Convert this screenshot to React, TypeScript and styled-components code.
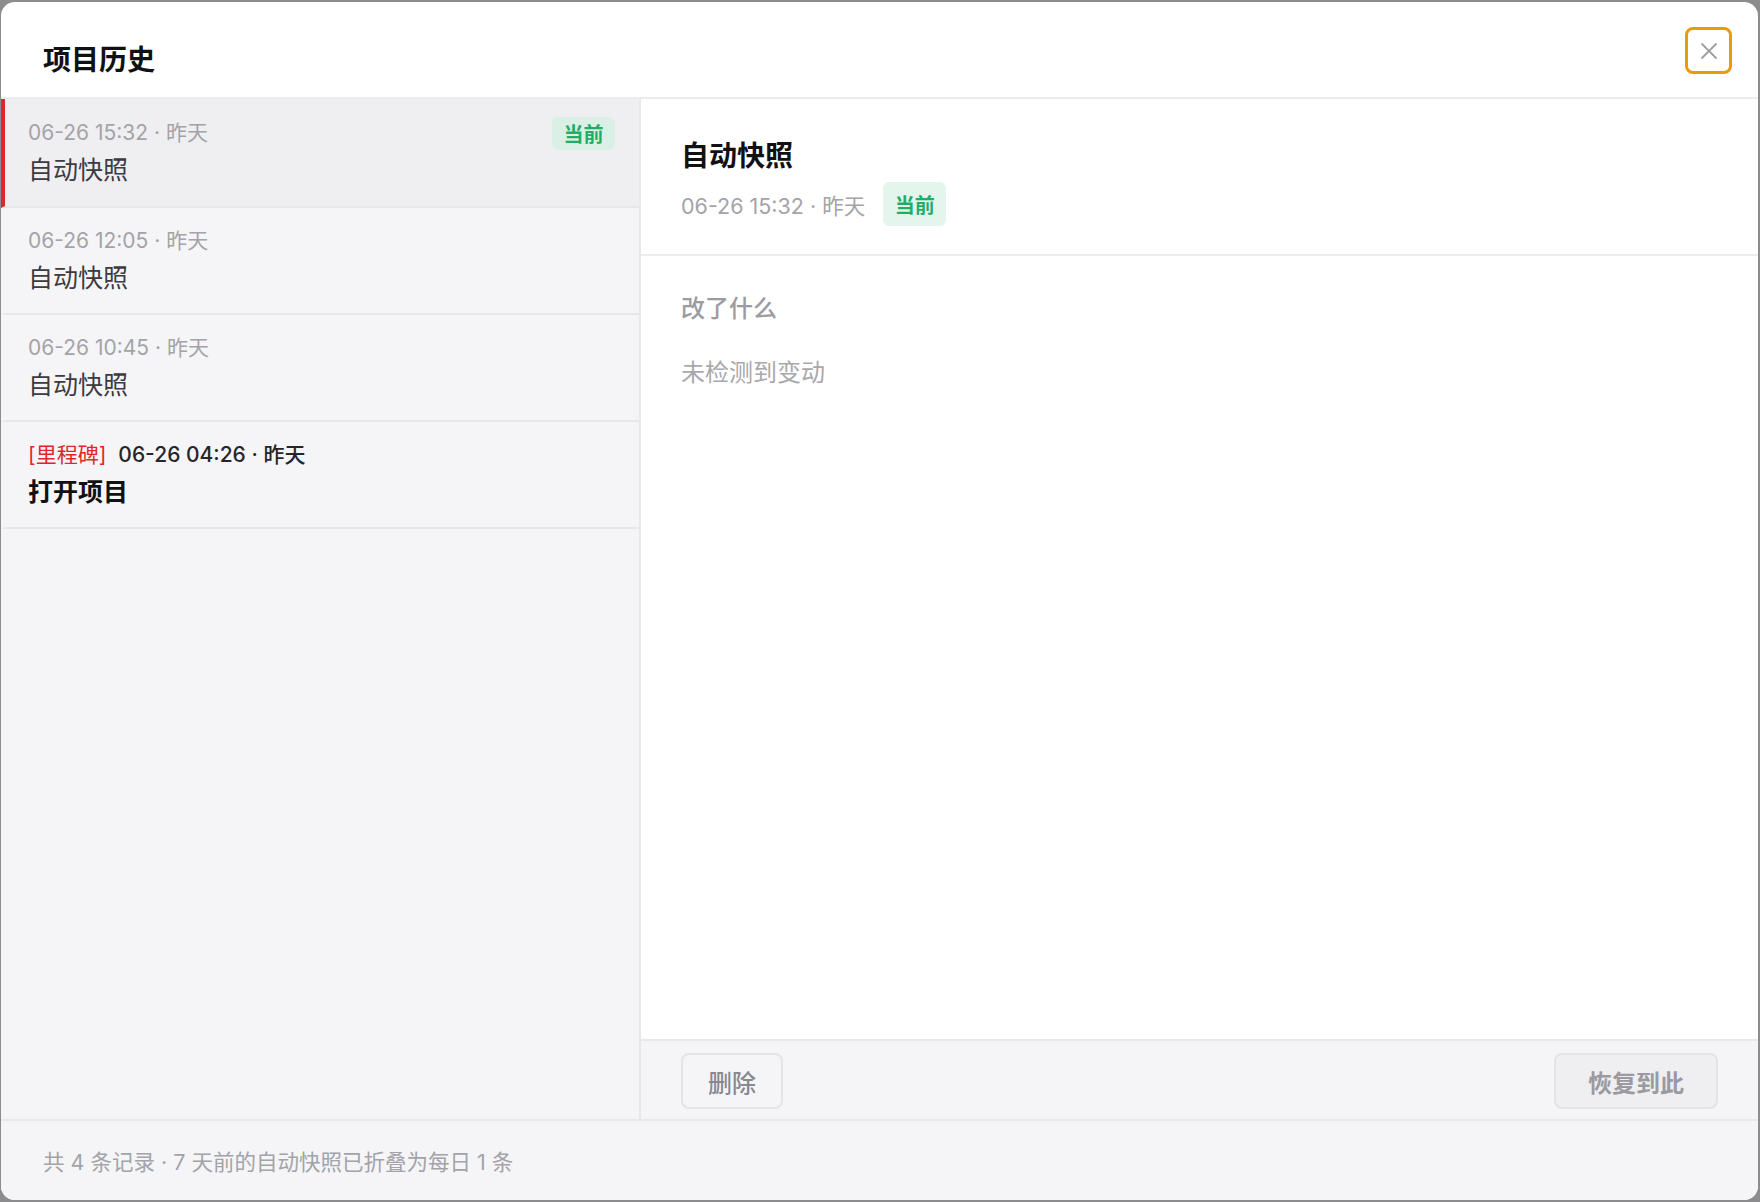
import styled, { createGlobalStyle } from 'styled-components'

const GlobalStyle = createGlobalStyle`
  html, body {
    margin: 0;
    padding: 0;
    background: #8c8c8e;
  }
  * {
    box-sizing: border-box;
  }
  body {
    font-family: Inter, "Noto Sans CJK SC", "Noto Sans", sans-serif;
  }
`

type Snapshot = {
  time: string
  title: string
  current?: boolean
  milestone?: boolean
}

const snapshots: Snapshot[] = [
  { time: '06-26 15:32 · 昨天', title: '自动快照', current: true },
  { time: '06-26 12:05 · 昨天', title: '自动快照' },
  { time: '06-26 10:45 · 昨天', title: '自动快照' },
  { time: '06-26 04:26 · 昨天', title: '打开项目', milestone: true },
]

const App = () => {
  const selected = snapshots[0]

  return (
    <Page>
      <GlobalStyle />
      <Dialog>
        <Header>
          <Title>项目历史</Title>
          <CloseBtn aria-label="关闭">
            <svg width="18" height="18" viewBox="0 0 18 18">
              <path d="M2 2 L16 16 M16 2 L2 16" stroke="#9d9da4" strokeWidth="1.8" strokeLinecap="round" />
            </svg>
          </CloseBtn>
        </Header>

        <Body>
          <List>
            {snapshots.map((s, i) => (
              <Item key={i} $active={i === 0}>
                <ItemTop>
                  <ItemTime $milestone={s.milestone}>
                    {s.milestone && <Milestone>[里程碑]</Milestone>}
                    {s.time}
                  </ItemTime>
                  {s.current && <Badge>当前</Badge>}
                </ItemTop>
                <ItemTitle $milestone={s.milestone}>{s.title}</ItemTitle>
              </Item>
            ))}
          </List>

          <Detail>
            <DetailHead>
              <DetailTitle>{selected.title}</DetailTitle>
              <DetailMeta>
                <MetaTime>{selected.time}</MetaTime>
                <Badge $large>当前</Badge>
              </DetailMeta>
            </DetailHead>
            <DetailContent>
              <SectionLabel>改了什么</SectionLabel>
              <EmptyText>未检测到变动</EmptyText>
            </DetailContent>
            <ActionBar>
              <ActionBtn>删除</ActionBtn>
              <ActionBtn $primary>恢复到此</ActionBtn>
            </ActionBar>
          </Detail>
        </Body>

        <Footer>共 4 条记录 · 7 天前的自动快照已折叠为每日 1 条</Footer>
      </Dialog>
    </Page>
  )
}

export default App

const Page = styled.div`
  width: 1760px;
  height: 1202px;
  padding: 2px 2px 2px 1px;
  display: flex;
`

const Dialog = styled.div`
  flex: 1;
  display: flex;
  flex-direction: column;
  background: #ffffff;
  border-radius: 14px;
  overflow: hidden;
`

const Header = styled.div`
  height: 97px;
  flex-shrink: 0;
  display: flex;
  justify-content: space-between;
  align-items: flex-start;
  padding: 25px 26px 0 42px;
  border-bottom: 2px solid #ececee;
`

const Title = styled.h1`
  margin: 14px 0 0;
  font-size: 28px;
  line-height: 38px;
  font-weight: 700;
  color: #111114;
`

const CloseBtn = styled.button`
  width: 47px;
  height: 47px;
  padding: 0;
  display: flex;
  align-items: center;
  justify-content: center;
  background: #ffffff;
  border: 3px solid #e99b0c;
  border-radius: 8px;
  cursor: pointer;
`

const Body = styled.div`
  flex: 1;
  display: flex;
  min-height: 0;
`

const List = styled.div`
  width: 640px;
  flex-shrink: 0;
  background: #f5f5f7;
  border-right: 2px solid #e8e8eb;
  display: flex;
  flex-direction: column;
`

const Item = styled.div<{ $active?: boolean }>`
  padding: ${({ $active }) => ($active ? '20px 24px 19px 23px' : '19px 24px 18px 23px')};
  border-bottom: 2px solid #e7e7ea;
  border-left: 4px solid ${({ $active }) => ($active ? '#e0262b' : 'transparent')};
  background: ${({ $active }) => ($active ? '#efeff1' : '#f5f5f7')};
`

const ItemTop = styled.div`
  display: flex;
  justify-content: space-between;
  align-items: center;
  height: 28px;
`

const ItemTime = styled.div<{ $milestone?: boolean }>`
  font-size: 21px;
  line-height: 28px;
  color: ${({ $milestone }) => ($milestone ? '#26262a' : '#a3a3a9')};
  font-weight: ${({ $milestone }) => ($milestone ? 500 : 400)};
`

const Milestone = styled.span`
  color: #e0262b;
  font-weight: 400;
  margin-right: 12px;
`

const ItemTitle = styled.div<{ $milestone?: boolean }>`
  margin-top: 6px;
  font-size: 25px;
  line-height: 34px;
  color: ${({ $milestone }) => ($milestone ? '#111114' : '#3b3b40')};
  font-weight: ${({ $milestone }) => ($milestone ? 700 : 400)};
`

const Badge = styled.span<{ $large?: boolean }>`
  display: inline-flex;
  align-items: center;
  justify-content: center;
  width: 63px;
  height: ${({ $large }) => ($large ? '44px' : '33px')};
  border-radius: 6px;
  background: ${({ $large }) => ($large ? '#e3f5ec' : '#daf0e6')};
  color: #1fae68;
  font-size: 20px;
  font-weight: 600;
`

const Detail = styled.div`
  flex: 1;
  display: flex;
  flex-direction: column;
  background: #ffffff;
`

const DetailHead = styled.div`
  padding: 38px 40px 28px;
  border-bottom: 2px solid #ececee;
`

const DetailTitle = styled.h2`
  margin: 0;
  font-size: 28px;
  line-height: 38px;
  font-weight: 700;
  color: #111114;
`

const DetailMeta = styled.div`
  margin-top: 7px;
  display: flex;
  align-items: center;
  gap: 18px;
`

const MetaTime = styled.span`
  font-size: 21.5px;
  color: #a3a3a9;
`

const DetailContent = styled.div`
  flex: 1;
  padding: 37px 40px;
`

const SectionLabel = styled.div`
  font-size: 24px;
  line-height: 32px;
  color: #9b9ba1;
  font-weight: 500;
`

const EmptyText = styled.div`
  margin-top: 32px;
  font-size: 24px;
  line-height: 32px;
  color: #a8a8ae;
`

const ActionBar = styled.div`
  height: 80px;
  flex-shrink: 0;
  display: flex;
  justify-content: space-between;
  align-items: flex-start;
  padding: 12px 40px 0;
  background: #f5f5f7;
  border-top: 2px solid #e8e8eb;
`

const ActionBtn = styled.button<{ $primary?: boolean }>`
  height: 56px;
  padding: 0 ${({ $primary }) => ($primary ? '32px' : '25px')};
  font-family: inherit;
  font-size: 24px;
  font-weight: ${({ $primary }) => ($primary ? 600 : 500)};
  color: ${({ $primary }) => ($primary ? '#9a9aa0' : '#88888e')};
  background: ${({ $primary }) => ($primary ? '#efeff1' : '#f5f5f7')};
  border: 2px solid #e4e4e7;
  border-radius: 8px;
  cursor: pointer;
`

const Footer = styled.div`
  height: 81px;
  flex-shrink: 0;
  display: flex;
  align-items: center;
  padding: 0 42px;
  background: #f5f5f7;
  border-top: 2px solid #e8e8eb;
  font-size: 21.5px;
  color: #a3a3a9;
`
